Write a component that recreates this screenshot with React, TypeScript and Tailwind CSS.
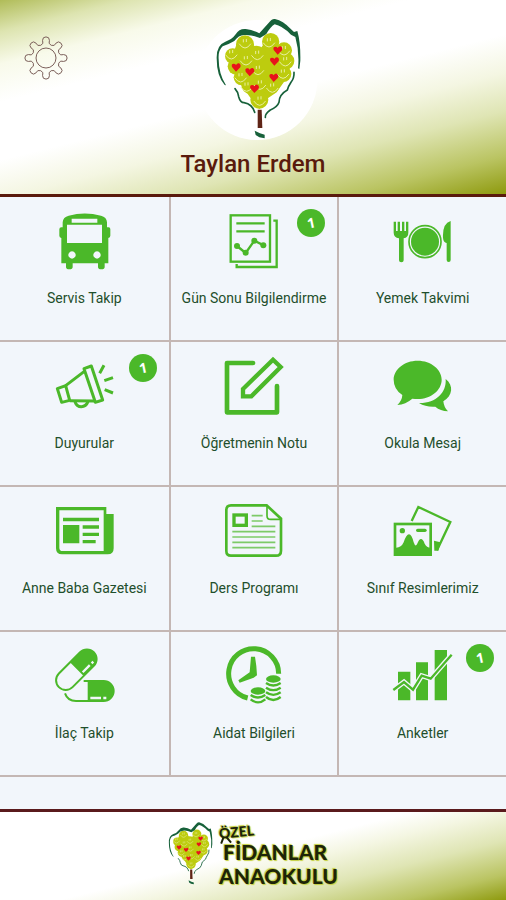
import React from 'react';

const GREEN = '#4bb829';
const PANEL = '#f2f6fb';

interface IconProps {
  viewBox: string;
  children: React.ReactNode;
}

const Icon: React.FC<IconProps> = ({ viewBox, children }) => (
  <svg viewBox={viewBox} className="size-[60px] overflow-visible" fill={GREEN} aria-hidden="true">
    {children}
  </svg>
);

const BusIcon = () => (
  <Icon viewBox="163 51 180 180">
    <path
      fillRule="evenodd"
      d="M189 82Q190 66 207 62Q255 49 304 62Q321 66 322 82V97H327Q332 97 332 103V122Q332 128 326 129V205H315V216Q315 223 305 223T295 216V205H219V216Q219 223 209 223T199 216V205H185V129Q179 128 179 122V103Q179 97 185 97H189ZM216 71V83H293V71ZM202 89V144H307V89ZM217 169a11 11 0 1 0 .1 0ZM292 169a11 11 0 1 0 .1 0Z"
    />
  </Icon>
);

const ReportIcon = () => (
  <Icon viewBox="672 51 180 180">
    <g fill="none" stroke={GREEN} strokeWidth="7">
      <rect x="692" y="61" width="118" height="139" />
      <path d="M820 77H830V216H710V207M709 85H794M709 109H794" />
      <path d="M711 153L737 174L763 137L791 151" />
    </g>
    <circle cx="711" cy="153" r="9" />
    <circle cx="737" cy="173" r="9" />
    <circle cx="763" cy="137" r="9" />
    <circle cx="790" cy="151" r="9" />
  </Icon>
);

const MealIcon = () => (
  <Icon viewBox="419 51 180 180">
    <path d="M421 80h7v28h5V80h7v28h6V80h7v28h5V80h7v33q0 14-14 17v66q0 6-7 6t-7-6v-66q-16-3-16-17Z" />
    <circle cx="515" cy="140" r="48" fill="none" stroke={GREEN} strokeWidth="5" />
    <circle cx="515" cy="140" r="42" />
    <path d="M592 78V195q0 6-6 6t-6-6V144q-10-2-11-16Q567 85 592 78Z" />
  </Icon>
);

const MegaphoneIcon = () => (
  <Icon viewBox="163 51 180 180">
    <g fill="none" stroke={GREEN} strokeWidth="9" strokeLinejoin="round">
      <path d="M173 146L198 137L210 181L186 187Z" />
      <path d="M198 137L254 94M210 182L286 183" />
      <path d="M253 86L275 78L309 180L287 187Z" />
      <path d="M226 185Q231 200 245 200T265 185" />
      <path d="M300 100L313 76M314 122L340 113M315 149L340 159" />
    </g>
  </Icon>
);

const EditIcon = () => (
  <Icon viewBox="672 51 180 180">
    <g fill="none" stroke={GREEN} strokeLinejoin="round" strokeLinecap="round">
      <path d="M759 69H681V217H831V138" strokeWidth="14" />
      <path d="M729 147L819 59L842 81L754 169H729Z" strokeWidth="13" strokeLinejoin="miter" />
    </g>
  </Icon>
);

const ChatIcon = () => (
  <Icon viewBox="419 51 180 180">
    <path d="M493 62C533 62 565 88 565 119S533 177 493 177Q485 177 477 176Q457 193 432 195Q446 182 447 165Q421 148 421 119C421 88 453 62 493 62Z" />
    <path d="M577 117C602 136 598 168 570 184Q572 203 584 214Q561 213 546 200Q518 202 497 189C548 190 580 158 577 117Z" />
  </Icon>
);

const NewspaperIcon = () => (
  <Icon viewBox="163 51 180 180">
    <path
      fillRule="evenodd"
      d="M169 66H320V87H342V190Q342 208 324 208H187Q169 208 169 190ZM179 76V188Q179 198 189 198H312V76Z"
    />
    <path d="M190 98H298V109H190ZM190 120H239V175H190ZM249 121H298V131H249ZM249 143H298V153H249ZM249 165H288V175H249Z" />
  </Icon>
);

const ScheduleIcon = () => (
  <Icon viewBox="672 51 180 180">
    <g fill="none" stroke={GREEN}>
      <path d="M693 61H800L843 101V197Q843 212 828 212H693Q679 212 679 198V75Q679 61 693 61Z" strokeWidth="8" />
      <path d="M801 62V92Q801 103 812 103H843" strokeWidth="5" />
      <rect x="702" y="90" width="37" height="31" strokeWidth="10" />
      <path
        d="M755 92H788M755 108H788M755 124H826M697 140H826M697 156H826M697 172H826M697 188H826"
        strokeWidth="5"
        opacity="0.7"
      />
    </g>
  </Icon>
);

const PhotosIcon = () => (
  <Icon viewBox="419 51 180 180">
    <path d="M475 108L495 66L591 111L551 196" fill="none" stroke={GREEN} strokeWidth="7" />
    <path d="M542 167L561 172L555 197H543Z" />
    <rect x="425" y="117" width="107" height="92" fill="none" stroke={GREEN} strokeWidth="8" />
    <circle cx="447" cy="137" r="8" />
    <rect x="488" y="131" width="32" height="10" rx="5" />
    <path d="M425 188Q443 190 451 172Q459 148 467 148T481 172Q486 187 491 178Q497 162 503 162T514 176Q520 188 532 188V209H425Z" />
  </Icon>
);

const PillsIcon = () => (
  <Icon viewBox="163 51 180 180">
    <g transform="translate(230 119) rotate(-45)">
      <rect x="-74" y="-29" width="148" height="58" rx="29" fill="none" stroke={GREEN} strokeWidth="6" />
      <path d="M2 -29H45A29 29 0 0 1 45 29H2Z" />
      <path d="M8 19H38M46 19H53" stroke={PANEL} strokeWidth="7" />
    </g>
    <path d="M252 153H312A30 30 0 0 1 312 213H229Q204 213 196 190" fill="none" stroke={GREEN} strokeWidth="6" />
    <path d="M264 152H312A30 30 0 0 1 312 213H264Z" />
    <path d="M272 204H304M311 204H320" stroke={PANEL} strokeWidth="7" />
  </Icon>
);

const FeesIcon = () => (
  <Icon viewBox="672 51 180 180">
    <path d="M836 131A75 75 0 1 0 743 204" fill="none" stroke={GREEN} strokeWidth="15" />
    <path d="M753 80H765Q770 108 771 136L761 143L719 158L715 151L749 127Z" />
    <ellipse cx="820" cy="147" rx="22" ry="11" />
    <ellipse cx="774" cy="183" rx="22" ry="11" />
    <g fill="none" stroke={GREEN} strokeWidth="7">
      <path d="M798 159Q820 174 842 159M798 173Q820 188 842 173M798 187Q820 202 842 187M798 201Q820 219 842 201" />
      <path d="M752 195Q774 210 796 195M752 208Q774 226 796 208" />
    </g>
  </Icon>
);

const SurveyIcon = () => (
  <Icon viewBox="419 51 180 180">
    <path d="M434 125H471V211H434ZM488 97H524V211H488ZM544 60H581V211H544Z" />
    <g fill="none">
      <path d="M420 180L452 156L479 179L505 137L532 146L595 74" stroke={PANEL} strokeWidth="15" />
      <path d="M420 180L452 156L479 179L505 137L532 146L595 74" stroke={GREEN} strokeWidth="7" />
    </g>
  </Icon>
);

// Engrenagem com 8 dentes arredondados
const gearPath = (() => {
  const point = (r: number, deg: number) => {
    const a = (deg * Math.PI) / 180;
    return `${(r * Math.cos(a)).toFixed(2)} ${(r * Math.sin(a)).toFixed(2)}`;
  };
  let d = '';
  for (let i = 0; i < 8; i++) {
    const c = i * 45;
    d += `${i === 0 ? 'M' : 'A4.5 4.5 0 0 0 '}${point(15, c - 12)}`;
    d += `L${point(18, c - 11)}A3.4 3.4 0 0 1 ${point(18, c + 11)}L${point(15, c + 12)}`;
  }
  return `${d}A4.5 4.5 0 0 0 ${point(15, -12)}Z`;
})();

const GearIcon = () => (
  <svg viewBox="-22 -22 44 44" className="size-11" fill="none" stroke="#7b5f5a" strokeWidth="1" aria-hidden="true">
    <path d={gearPath} />
    <circle r="10" />
  </svg>
);

const leaves = [
  [135, 106, 27], [98, 141, 23], [212, 98, 26], [252, 124, 24], [170, 138, 28], [108, 172, 25],
  [258, 156, 25], [250, 195, 24], [125, 205, 24], [150, 228, 26], [215, 225, 26], [178, 272, 27],
];

const smiles = [
  [135, 104], [94, 137], [172, 139], [207, 101], [252, 125], [256, 158], [138, 155], [174, 184],
  [122, 206], [249, 195], [140, 234], [180, 228], [217, 237], [179, 276],
];

const hearts = [
  [233, 124], [223, 157], [108, 175], [149, 189], [221, 206], [163, 239],
];

const TreeDrawing = () => (
  <>
    <g fill="#bdcc0e">
      <path d="M110 105L160 108L178 124L195 100L250 110L275 150L262 205L230 250L200 270L178 300L150 265L115 215L90 160Z" />
      {leaves.map(([x, y, r]) => (
        <circle key={`${x}-${y}`} cx={x} cy={y} r={r} />
      ))}
    </g>
    <g fill="none" stroke="#e9efa0" strokeWidth="3" strokeLinecap="round">
      {smiles.map(([x, y]) => (
        <path key={`${x}-${y}`} d={`M${x - 17} ${y + 1}q17 25 34 0m-22-13v7m9-8v7`} />
      ))}
    </g>
    <g fill="#e8131b">
      {hearts.map(([x, y]) => (
        <path key={`${x}-${y}`} d={`M${x} ${y + 13}l-12-14q-3-10 5-10q5 0 7 4q3-6 9-5q7 3 4 12Z`} />
      ))}
    </g>
    <g fill="#17613a">
      <path d="M50 148Q49 108 76 98Q96 92 107 76Q118 58 137 60Q160 63 178 73L205 43Q216 28 225 30Q250 36 270 58L282 69L292 66Q302 100 301 155L298 180L294 178Q299 130 286 84L273 77Q246 50 224 46Q211 54 199 75L180 87Q155 76 132 78Q116 78 103 96Q84 107 68 112Q54 125 56 150Q56 195 78 229L74 228Q50 202 50 148Z" />
    </g>
    <g fill="none" stroke="#17613a" strokeWidth="5" strokeLinecap="round">
      <path d="M105 239Q115 250 116 263Q121 281 132 281Q157 285 164 310" />
      <path d="M282 190Q283 207 273 220Q265 232 262 243Q237 257 237 280Q232 295 211 303Q194 315 196 325" />
    </g>
    <path d="M173 302H185L187 357H173Z" fill="#5f2416" />
    <path d="M164 365L180 373L194 377V388L178 385L167 378Z" fill="#17613a" />
  </>
);

interface MenuItem {
  label: string;
  icon: React.FC;
  badge?: number;
}

const menuItems: MenuItem[] = [
  { label: 'Servis Takip', icon: BusIcon },
  { label: 'Gün Sonu Bilgilendirme', icon: ReportIcon, badge: 1 },
  { label: 'Yemek Takvimi', icon: MealIcon },
  { label: 'Duyurular', icon: MegaphoneIcon, badge: 1 },
  { label: 'Öğretmenin Notu', icon: EditIcon },
  { label: 'Okula Mesaj', icon: ChatIcon },
  { label: 'Anne Baba Gazetesi', icon: NewspaperIcon },
  { label: 'Ders Programı', icon: ScheduleIcon },
  { label: 'Sınıf Resimlerimiz', icon: PhotosIcon },
  { label: 'İlaç Takip', icon: PillsIcon },
  { label: 'Aidat Bilgileri', icon: FeesIcon },
  { label: 'Anketler', icon: SurveyIcon, badge: 1 },
];

const App: React.FC = () => {
  return (
    <div className="flex min-h-screen flex-col bg-[#f2f6fb] font-['Roboto',sans-serif]">
      <header className="grid grid-cols-[1fr_auto_1fr] items-start border-b-3 border-[#5a1a0c] bg-[linear-gradient(166deg,#b0bc58_0%,#dde4b0_10%,#f8faea_20%,#ffffff_32%,#ffffff_50%,#f4f6e2_62%,#dfe5b4_74%,#bac462_88%,#8e9a0e_100%)]">
        <button type="button" aria-label="Ayarlar" className="ml-6 mt-9 w-11 cursor-pointer">
          <GearIcon />
        </button>
        <div className="flex flex-col items-center pb-3.5 pt-5">
          <svg viewBox="-45 33 408 360" className="h-[120px] w-[136px] overflow-visible" role="img" aria-label="Özel Fidanlar Anaokulu">
            <circle cx="172" cy="213" r="180" fill="#ffffff" />
            <TreeDrawing />
          </svg>
          <h1 className="mt-2 text-2xl font-medium text-[#5a1a0c]">Taylan Erdem</h1>
        </div>
      </header>

      <nav className="grid grid-cols-3">
        {menuItems.map(({ label, icon: ItemIcon, badge }) => (
          <a
            key={label}
            href="#"
            className="relative flex flex-col items-center border-b-2 border-l-2 border-[#c4b7b4] pb-8 pt-[15px] nth-[3n+1]:border-l-0"
          >
            <ItemIcon />
            <span className="mt-4 whitespace-nowrap text-sm text-[#1f4f2c]">{label}</span>
            {badge && (
              <span className="absolute right-3 top-3 flex size-7 items-center justify-center rounded-full bg-[#4bb829] font-['Open_Sans',sans-serif] text-sm font-bold text-white">
                <span className="-rotate-12">{badge}</span>
              </span>
            )}
          </a>
        ))}
      </nav>

      <footer className="mt-8 flex flex-1 items-start justify-center gap-1.5 border-t-3 border-[#5a1a1c] bg-[linear-gradient(166deg,#ffffff_0%,#ffffff_48%,#f4f6e2_58%,#dfe5b4_72%,#bac462_88%,#8e9a0e_100%)] pb-3 pt-2">
        <svg viewBox="45 28 260 364" className="mt-0.5 h-[63px] w-[45px]" aria-hidden="true">
          <TreeDrawing />
        </svg>
        <div className="flex flex-col items-start pt-1 font-['Lato',sans-serif] font-black text-[#1d2408] [text-shadow:1px_1px_1px_#c3cf3c,-1px_-1px_1px_#c3cf3c]">
          <span className="relative -rotate-6 text-sm leading-4">
            ÖZEL
            <svg viewBox="0 0 12 8" className="absolute left-0 top-3 h-2 w-3" fill="none" stroke="#1d2408" strokeWidth="2" aria-hidden="true">
              <path d="M4 0L1 6M7 0L11 6" />
            </svg>
          </span>
          <span className="pl-1 text-[21px] leading-6">FİDANLAR</span>
          <span className="text-[21px] leading-6">ANAOKULU</span>
        </div>
      </footer>
    </div>
  );
};

export default App;
